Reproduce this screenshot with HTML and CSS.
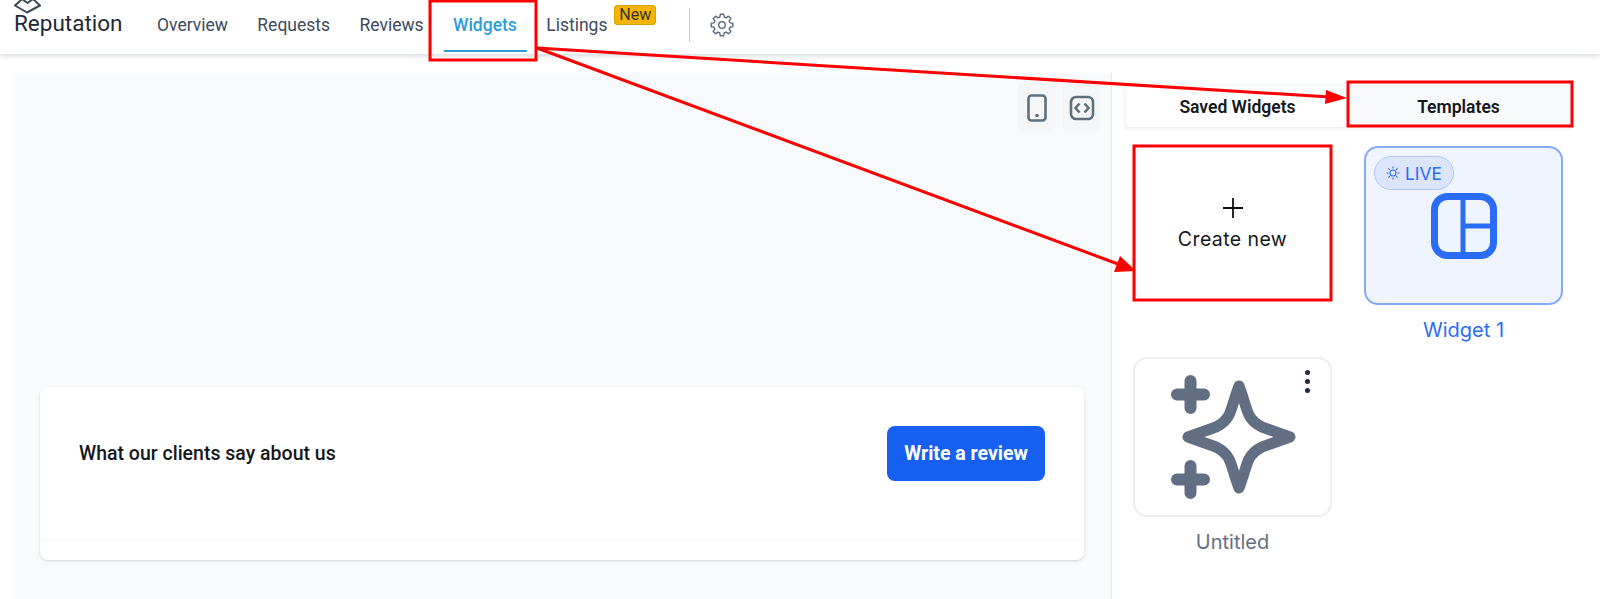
FILE: index.html
```html
<!DOCTYPE html>
<html lang="en">
<head>
  <meta charset="UTF-8">
  <meta name="viewport" content="width=device-width, initial-scale=1.0">
  <title>Reputation - Widgets</title>
  <link rel="stylesheet" href="styles.css">
</head>
<body>
  <header class="topbar">
    <div class="brand">
      <svg class="brand-mark" width="28" height="14" viewBox="0 0 28 14" fill="none" stroke="#3f4a57" stroke-width="2" stroke-linejoin="round">
        <path d="M8 -1 L1 5.500 L13 12.500 L26 5.500 L19 -1"/>
        <path d="M8 -1 L13.500 3 L19 -1"/>
      </svg>
      <span>Reputation</span>
    </div>
    <nav class="tabs">
      <a class="tab">Overview</a>
      <a class="tab">Requests</a>
      <a class="tab">Reviews</a>
      <a class="tab active">Widgets</a>
      <a class="tab listings">Listings <span class="badge">New</span></a>
    </nav>
    <span class="nav-sep"></span>
    <svg class="gear" width="24" height="24" viewBox="1 1 22 22" fill="none" stroke="#5f6b7a" stroke-width="1.300" stroke-linejoin="round">
      <circle cx="12" cy="12" r="3"/>
      <path d="M10.44 2.12L13.56 2.12L13.97 4.66L15.8 5.42L17.88 3.91L20.09 6.12L18.58 8.2L19.34 10.03L21.88 10.44L21.88 13.56L19.34 13.97L18.58 15.8L20.09 17.88L17.88 20.09L15.8 18.58L13.97 19.34L13.56 21.88L10.44 21.88L10.03 19.34L8.2 18.58L6.12 20.09L3.91 17.88L5.42 15.8L4.66 13.97L2.12 13.56L2.12 10.44L4.66 10.03L5.42 8.2L3.91 6.12L6.12 3.91L8.2 5.42L10.03 4.66Z"/>
    </svg>
  </header>

  <main class="layout">
    <section class="preview">
      <div class="preview-tools">
        <button class="tool">
          <svg width="22" height="30" viewBox="0 0 22 30" fill="none" stroke="#5f6f7b" stroke-width="2.600">
            <rect x="2.500" y="2.500" width="17" height="25" rx="3"/>
            <circle cx="11" cy="22.500" r="1.800" fill="#5f6f7b" stroke="none"/>
          </svg>
        </button>
        <button class="tool">
          <svg width="26" height="26" viewBox="0 0 26 26" fill="none" stroke="#5f6f7b" stroke-width="2.600">
            <rect x="2" y="2" width="22" height="22" rx="5"/>
            <path d="M10.500 8.500 L6.500 13 L10.500 17.500 M15.500 8.500 L19.500 13 L15.500 17.500"/>
          </svg>
        </button>
      </div>
      <div class="review-card">
        <div class="review-head">
          <span class="review-title">What our clients say about us</span>
          <button class="review-btn">Write a review</button>
        </div>
        <div class="review-foot"></div>
      </div>
    </section>

    <aside class="sidebar">
      <div class="switch">
        <div class="switch-item on">Saved Widgets</div>
        <div class="switch-item">Templates</div>
      </div>
      <div class="cards">
        <div class="card-wrap">
          <div class="card create">
            <svg width="22" height="22" viewBox="0 0 22 22" stroke="#111" stroke-width="1.800"><path d="M11 1v20M1 11h20"/></svg>
            <span>Create new</span>
          </div>
        </div>
        <div class="card-wrap">
          <div class="card live">
            <span class="live-pill">
              <svg width="14" height="14" viewBox="0 0 14 14" fill="none" stroke="#2f6bf0" stroke-width="1.100">
                <circle cx="7" cy="7" r="3"/>
                <path d="M7 .5v2M7 11.500v2M.5 7h2M11.500 7h2M2.400 2.400l1.400 1.400M10.200 10.200l1.400 1.400M2.400 11.600l1.400-1.400M10.200 3.800l1.400-1.400"/>
              </svg>
              LIVE
            </span>
            <svg class="live-icon" width="66" height="66" viewBox="0 0 66 66" fill="none" stroke="#2b6cf6" stroke-width="7">
              <rect x="3.500" y="3.500" width="59" height="59" rx="13"/>
              <path d="M32 3v60M32 33h31" stroke-width="5"/>
            </svg>
          </div>
          <div class="card-name blue">Widget 1</div>
        </div>
        <div class="card-wrap">
          <div class="card untitled">
            <span class="dots"><i></i><i></i><i></i></span>
            <svg width="126" height="126" viewBox="0 0 126 126" fill="none" stroke="#626e82" stroke-linecap="round" stroke-linejoin="round">
              <path stroke-width="11" d="M69 12 C74 25 76 35 79 41 C82 47 86 50 92 53 L120 63 L92 73 C86 76 82 79 79 85 C76 91 74 101 69 114 C64 101 62 91 59 85 C56 79 52 76 46 73 L18 63 L46 53 C52 50 56 47 59 41 C62 35 64 25 69 12 Z"/>
              <path stroke-width="12" d="M20.500 7v27M7 20.500h27M20.500 92v27M7 105.500h27"/>
            </svg>
          </div>
          <div class="card-name">Untitled</div>
        </div>
      </div>
    </aside>
  </main>

  <!-- annotations drawn on top of the screenshot -->
  <svg class="marks" width="1600" height="599" viewBox="0 0 1600 599" fill="none">
    <g stroke="#f00" stroke-width="3">
      <rect x="430" y="1" width="106" height="59"/>
      <rect x="1348" y="82" width="224" height="44"/>
      <rect x="1134" y="146" width="197" height="154"/>
      <path d="M537 48 L1326 96.800"/>
      <path d="M537 48 L1118 264"/>
    </g>
    <path d="M1347 98 L1326 90 L1325 104 Z" fill="#f00"/>
    <path d="M1136 271 L1120 256 L1114 272 Z" fill="#f00"/>
  </svg>
</body>
</html>
```

FILE: styles.css
```css
html, body {
  margin: 0;
  height: 599px;
  overflow: hidden;
  background: #fff;
  font-family: Roboto, sans-serif;
}
.topbar {
  height: 54px;
  display: flex;
  align-items: flex-start;
  background: #fff;
  box-shadow: 0 2px 5px rgba(70,90,110,0.22);
  padding-left: 14px;
  box-sizing: border-box;
  position: relative;
}
.brand {
  width: 143px;
  font-size: 22.500px;
  color: #1f2937;
  line-height: 24px;
  padding-top: 11px;
  position: relative;
}
.brand-mark {
  position: absolute;
  left: 0;
  top: 0;
}
.tabs {
  display: flex;
}
.tab {
  font-size: 17.500px;
  color: #3d4a5c;
  line-height: 20px;
  padding-top: 15px;
  margin-right: 29.400px;
}
.tab.active {
  color: #2d9cdb;
  font-weight: 500;
  height: 36px;
  position: relative;
}
.tab.active::after {
  content: "";
  position: absolute;
  left: -9px;
  right: -10px;
  bottom: -1px;
  height: 2px;
  background: #2d9cdb;
}
.listings {
  margin-right: 0;
  position: relative;
  width: 143px;
}
.badge {
  position: absolute;
  left: 68px;
  top: 5px;
  width: 42px;
  height: 20px;
  line-height: 18px;
  font-size: 16px;
  text-align: center;
  background: #f5b400;
  color: #333;
  border: 1px solid #d9a300;
  border-radius: 3px;
  box-sizing: border-box;
}
.nav-sep {
  width: 1px;
  height: 34px;
  margin-top: 8px;
  background: #ccd0d6;
}
.gear {
  margin: 13px 0 0 20px;
}

.layout {
  display: flex;
  height: 526px;
  margin-top: 19px;
}
.preview {
  width: 1099px;
  margin-left: 13px;
  background: #f9fafc;
  box-sizing: border-box;
  padding: 10px 10px 0 27px;
  border-right: 1px solid #e4e6ea;
}
.preview-tools {
  display: flex;
  justify-content: flex-end;
  gap: 6px;
}
.tool {
  width: 39px;
  height: 49px;
  border: none;
  border-radius: 6px;
  background: #f5f6f8;
  padding: 0;
  display: flex;
  align-items: center;
  justify-content: center;
}
.review-card {
  margin: 255px 17px 0 0;
  height: 173px;
  background: #fff;
  border-radius: 8px;
  box-shadow: 0 1px 3px rgba(0,0,0,0.16);
  display: flex;
  flex-direction: column;
}
.review-head {
  height: 153px;
  display: flex;
  align-items: flex-start;
  justify-content: space-between;
  padding: 39px 39px 0 39px;
  border-bottom: 1px solid #f6f6f7;
  box-sizing: border-box;
}
.review-title {
  font-size: 19.500px;
  font-weight: 500;
  color: #16181c;
  line-height: 55px;
}
.review-btn {
  width: 158px;
  height: 55px;
  background: #175ff0;
  border: none;
  border-radius: 8px;
  color: #fff;
  font-family: Roboto, sans-serif;
  font-size: 19.500px;
  font-weight: 700;
  padding: 0;
}

.sidebar {
  flex: 1;
  padding: 10px 26px 0 11px;
  font-family: Inter, sans-serif;
}
.switch {
  display: flex;
  width: 450px;
  height: 48px;
  background: #f8f9fa;
  border-radius: 4px;
  padding: 4px;
  box-sizing: border-box;
}
.switch-item {
  flex: 1;
  text-align: center;
  font-size: 17.500px;
  font-weight: 600;
  color: #14181f;
  line-height: 40px;
  font-family: Roboto, sans-serif;
}
.switch-item.on {
  background: #fff;
  border-radius: 4px;
  box-shadow: 0 1px 2px rgba(0,0,0,0.06);
}
.cards {
  display: grid;
  grid-template-columns: 199px 199px;
  column-gap: 32px;
  row-gap: 16px;
  padding: 15px 0 0 10px;
}
.card-wrap {
  text-align: center;
}
.card {
  height: 159px;
  border-radius: 14px;
  box-sizing: border-box;
  position: relative;
  display: flex;
  flex-direction: column;
  align-items: center;
  justify-content: center;
}
.create {
  gap: 8px;
  font-size: 19.500px;
  color: #15181d;
  height: 155px;
  border: 1px solid #eeeff2;
}
.create span {
  letter-spacing: 0.4px;
}
.live {
  background: #eff4ff;
  border: 2px solid #84aaf8;
}
.live-pill {
  position: absolute;
  left: 8px;
  top: 8px;
  width: 80px;
  height: 34px;
  border: 1px solid #b4c8f6;
  border-radius: 17px;
  background: #dbe6fd;
  color: #2f6bf0;
  font-size: 17.500px;
  display: flex;
  align-items: center;
  justify-content: center;
  gap: 5px;
  box-sizing: border-box;
}
.card-name {
  font-size: 20px;
  color: #64707f;
  margin-top: 14px;
  line-height: 22px;
}
.card-name.blue {
  color: #2b6cf6;
}
.untitled {
  border: 2px solid #eceef2;
  height: 160px;
}
.dots {
  position: absolute;
  right: 20px;
  top: 11px;
  display: flex;
  flex-direction: column;
  gap: 4px;
}
.dots i {
  width: 5px;
  height: 5px;
  border-radius: 50%;
  background: #1e2a44;
}

.marks {
  position: absolute;
  left: 0;
  top: 0;
}
```
